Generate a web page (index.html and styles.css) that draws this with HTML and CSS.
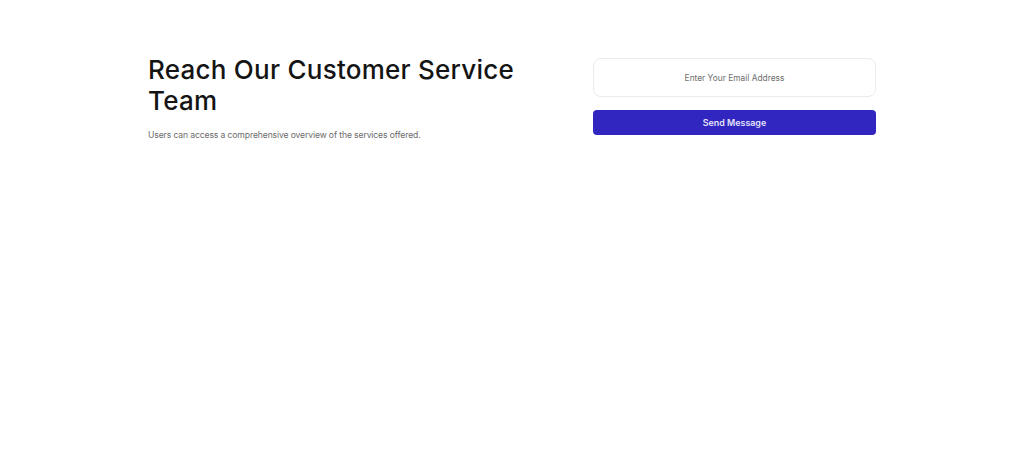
FILE: index.html
```html
<!DOCTYPE html>
<html lang="en">
<head>
<meta charset="utf-8">
<link rel="stylesheet" href="styles.css">
</head>
<body>
<section class="contact">
  <div class="intro">
    <h1 class="title">Reach Our Customer Service Team</h1>
    <p class="subtitle">Users can access a comprehensive overview of the services offered.</p>
  </div>
  <form class="form">
    <input class="email" type="email" placeholder="Enter Your Email Address">
    <button class="send" type="button">Send Message</button>
  </form>
</section>
</body>
</html>
```
FILE: styles.css
```css
html, body {
  margin: 0;
  padding: 0;
  background: #ffffff;
}
body {
  font-family: "Inter", "Liberation Sans", sans-serif;
}
.contact {
  width: 728px;
  margin: 0 auto;
  padding-top: 58px;
  display: flex;
  justify-content: space-between;
  align-items: flex-start;
}
.intro {
  width: 380px;
}
.title {
  margin: -4px 0 0;
  font-size: 26px;
  line-height: 31px;
  font-weight: 500;
  letter-spacing: 0.25px;
  color: #141414;
}
.subtitle {
  margin: 14px 0 0;
  font-size: 8.6px;
  letter-spacing: -0.12px;
  color: #6b6b6b;
}
.form {
  width: 283px;
  display: flex;
  flex-direction: column;
  gap: 13px;
}
.email {
  box-sizing: border-box;
  height: 39px;
  border: 1px solid #ebebeb;
  border-radius: 8px;
  text-align: center;
  font-family: inherit;
  font-size: 8.4px;
  color: #333;
  outline: none;
}
.email::placeholder {
  color: #6e6e6e;
}
.send {
  box-sizing: border-box;
  height: 25px;
  border: none;
  border-radius: 4px;
  background: #3127c0;
  color: #e4e2fb;
  font-family: inherit;
  font-size: 8.9px;
  font-weight: 600;
}
```
